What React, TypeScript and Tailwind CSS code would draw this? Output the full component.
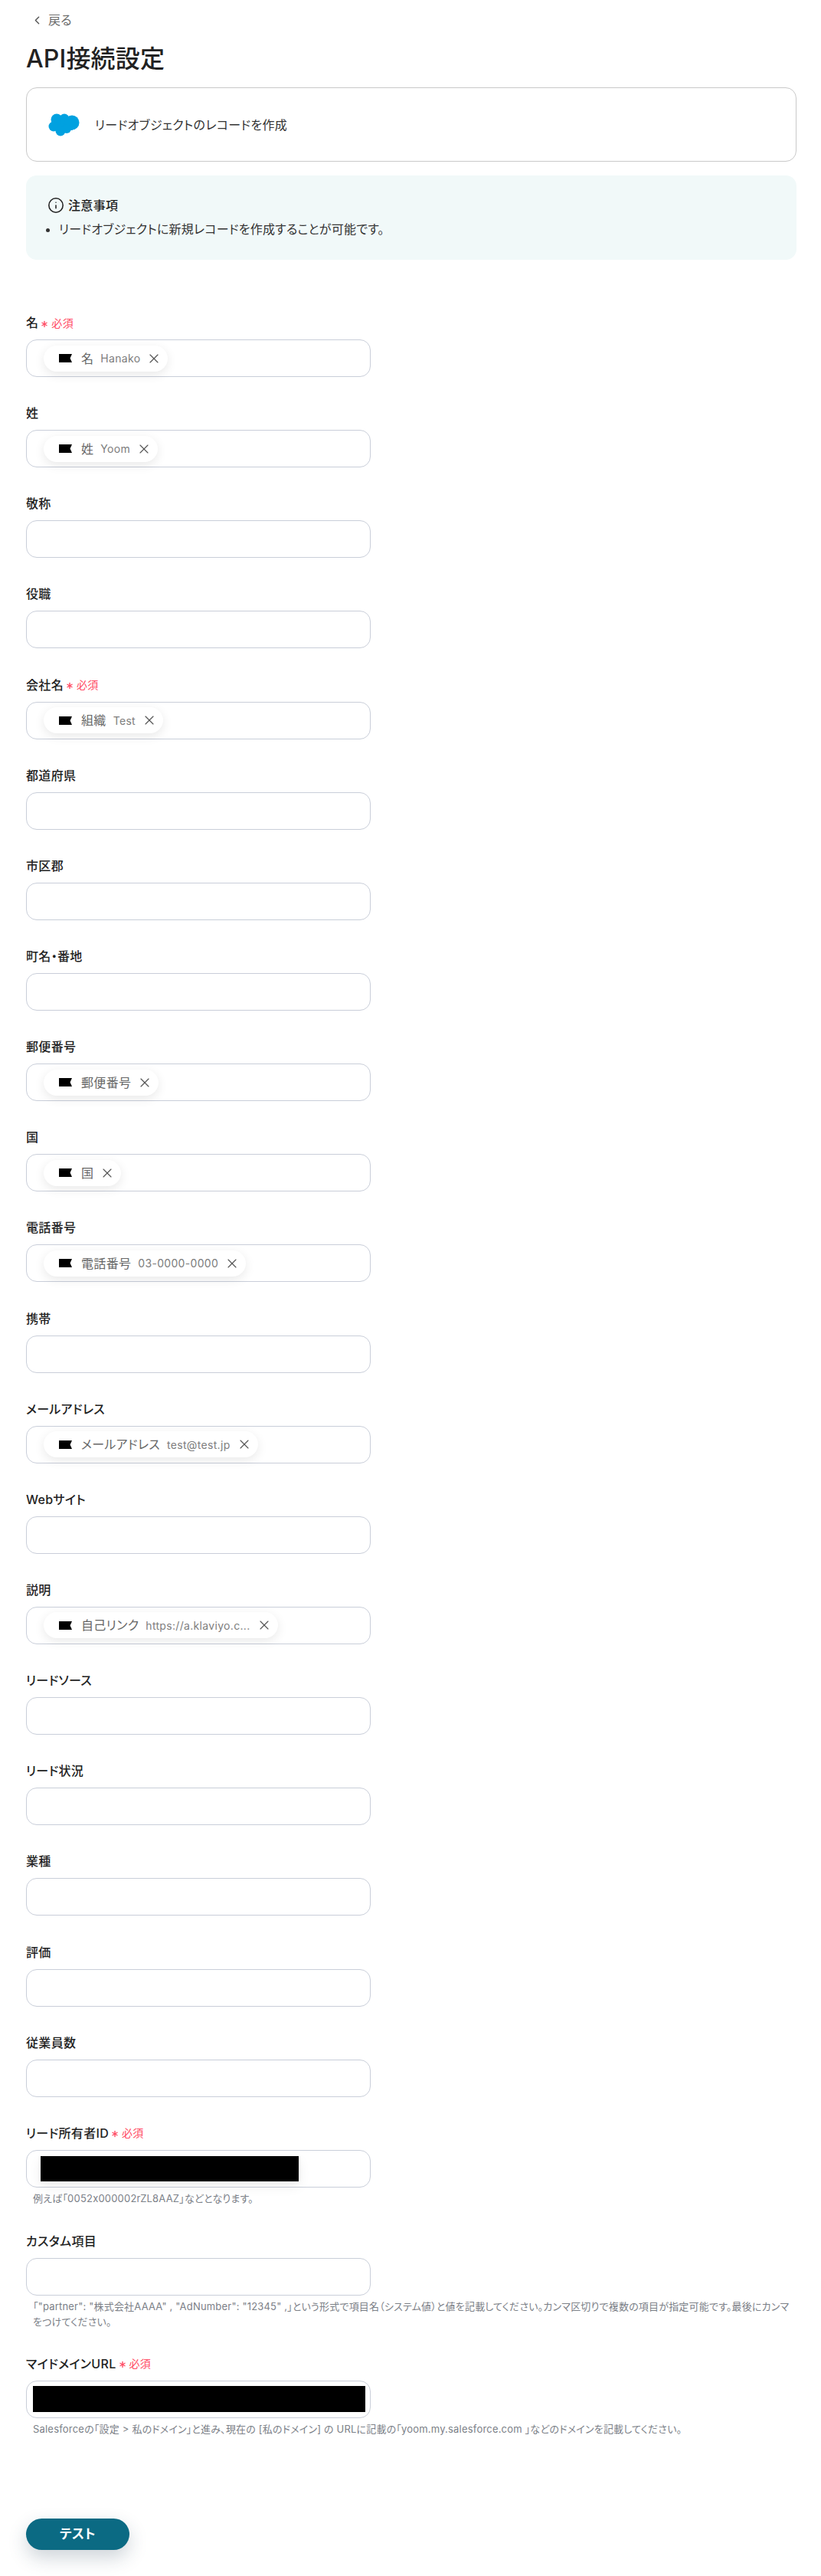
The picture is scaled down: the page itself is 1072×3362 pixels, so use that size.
import { Asterisk, ChevronLeft, Info, X } from "lucide-react";

type FieldProps = {
  label: string;
  required?: boolean;
  chip?: { name: string; value?: string };
  redact?: string;
  hint?: string;
  className?: string;
};

const fields: FieldProps[] = [
  { label: "名", required: true, chip: { name: "名", value: "Hanako" } },
  { label: "姓", chip: { name: "姓", value: "Yoom" } },
  { label: "敬称" },
  { label: "役職" },
  { label: "会社名", required: true, chip: { name: "組織", value: "Test" } },
  { label: "都道府県" },
  { label: "市区郡" },
  { label: "町名・番地" },
  { label: "郵便番号", chip: { name: "郵便番号" } },
  { label: "国", chip: { name: "国" } },
  { label: "電話番号", chip: { name: "電話番号", value: "03-0000-0000" } },
  { label: "携帯" },
  { label: "メールアドレス", chip: { name: "メールアドレス", value: "test@test.jp" } },
  { label: "Webサイト" },
  { label: "説明", chip: { name: "自己リンク", value: "https://a.klaviyo.c..." } },
  { label: "リードソース" },
  { label: "リード状況" },
  { label: "業種" },
  { label: "評価" },
  { label: "従業員数" },
];

export default function App() {
  return (
    <main className="min-h-[3362px] bg-white pl-[34px] pr-[32px] pt-[16px] font-['Inter','Noto_Sans_CJK_JP',sans-serif] tracking-[.02em] text-[#222] [font-feature-settings:'palt']">
      <a className="flex h-[20px] items-center gap-[6px] pl-[6px] text-[16px] text-[#6b6b6b]">
        <ChevronLeft size={17} strokeWidth={2} className="text-[#555]" />
        戻る
      </a>

      <h1 className="mt-[22px] text-[32px] font-medium leading-[38px] tracking-[.005em] text-[#222]">API接続設定</h1>

      <section className="mt-[18px] flex h-[97px] items-center gap-[20px] rounded-[14px] border border-[#c9c9c9] pl-[28px]">
        <SalesforceCloud />
        <span className="text-[16px] text-[#333]">リードオブジェクトのレコードを作成</span>
      </section>

      <section className="mt-[18px] h-[110px] rounded-[14px] bg-[#f1f9f9] pl-[28px] pt-[28px]">
        <div className="flex items-center gap-[5px] text-[16px] font-medium leading-[20px]">
          <Info size={22} strokeWidth={1.7} />
          注意事項
        </div>
        <ul className="mt-[10px] list-disc pl-[15px] text-[16px] leading-[20px] tracking-[.015em] text-[#333]">
          <li>リードオブジェクトに新規レコードを作成することが可能です。</li>
        </ul>
      </section>

      <div className="mt-[72px]">
        {fields.map((f) => (
          <Field key={f.label} {...f} className="h-[118.15px]" />
        ))}
        <Field
          label="リード所有者ID"
          required
          redact="ml-[18px] h-[33px] w-[337px] shadow-[0_6px_16px_rgba(0,0,0,.08)]"
          hint="例えば「0052x000002rZL8AAZ」などとなります。"
          className="h-[141px]"
        />
        <Field
          label="カスタム項目"
          hint={'「"partner": "株式会社AAAA" , "AdNumber": "12345" ,」という形式で項目名（システム値）と値を記載してください。カンマ区切りで複数の項目が指定可能です。最後にカンマをつけてください。'}
          className="h-[160px]"
        />
        <Field
          label="マイドメインURL"
          required
          redact="ml-[8px] h-[34px] w-[434px]"
          hint="Salesforceの「設定 > 私のドメイン」と進み、現在の [私のドメイン] の URLに記載の「yoom.my.salesforce.com 」などのドメインを記載してください。"
          className="h-[212px]"
        />
      </div>

      <button className="h-[41px] w-[135px] rounded-full bg-[#0b6a83] text-[17px] font-bold text-white shadow-[0_10px_24px_rgba(30,60,80,.22)]">
        テスト
      </button>
    </main>
  );
}

function Field({ label, required, chip, redact, hint, className }: FieldProps) {
  return (
    <div className={className}>
      <div className="flex h-[20px] items-center text-[16px] font-medium text-[#222]">
        {label}
        {required && (
          <span className="ml-[1px] flex items-center gap-[2px] text-[14px] font-normal text-[#ff4a63]">
            <Asterisk size={14} strokeWidth={2.4} className="mt-[3px]" />
            必須
          </span>
        )}
      </div>
      <div className="mt-[12px] flex h-[49px] w-[450px] items-center rounded-[14px] border border-[#c9ced9] bg-white">
        {chip && <Chip {...chip} />}
        {redact && <div className={`bg-black ${redact}`} />}
      </div>
      {hint && <p className="mt-[4px] pl-[9px] text-[13px] leading-[20px] tracking-[.015em] text-[#7b8087]">{hint}</p>}
    </div>
  );
}

function Chip({ name, value }: { name: string; value?: string }) {
  return (
    <div className="ml-[22px] flex h-[34px] items-center rounded-full bg-white pl-[20px] pr-[8px] shadow-[0_4px_14px_rgba(0,0,0,.09)]">
      <svg width="17" height="11" viewBox="0 0 17 11" className="shrink-0">
        <path d="M0 0h17l-2.5 5.5L17 11H0z" fill="#000" />
      </svg>
      <span className="ml-[12px] text-[16px] text-[#666]">{name}</span>
      {value && <span className="ml-[9px] text-[14px] text-[#7d7d7d]">{value}</span>}
      <X size={20} strokeWidth={1.4} className="ml-[8px] text-[#555]" />
    </div>
  );
}

function SalesforceCloud() {
  return (
    <svg width="41" height="30" viewBox="0 0 41 30" className="shrink-0">
      <g fill="#00a1e0">
        <rect x="8" y="8" width="24" height="14" />
        <circle cx="11" cy="8" r="7.5" />
        <circle cx="21" cy="7" r="6.5" />
        <circle cx="31" cy="12" r="9.5" />
        <circle cx="7" cy="17" r="6.5" />
        <circle cx="16" cy="23" r="6.5" />
        <circle cx="24" cy="20" r="6" />
      </g>
    </svg>
  );
}
